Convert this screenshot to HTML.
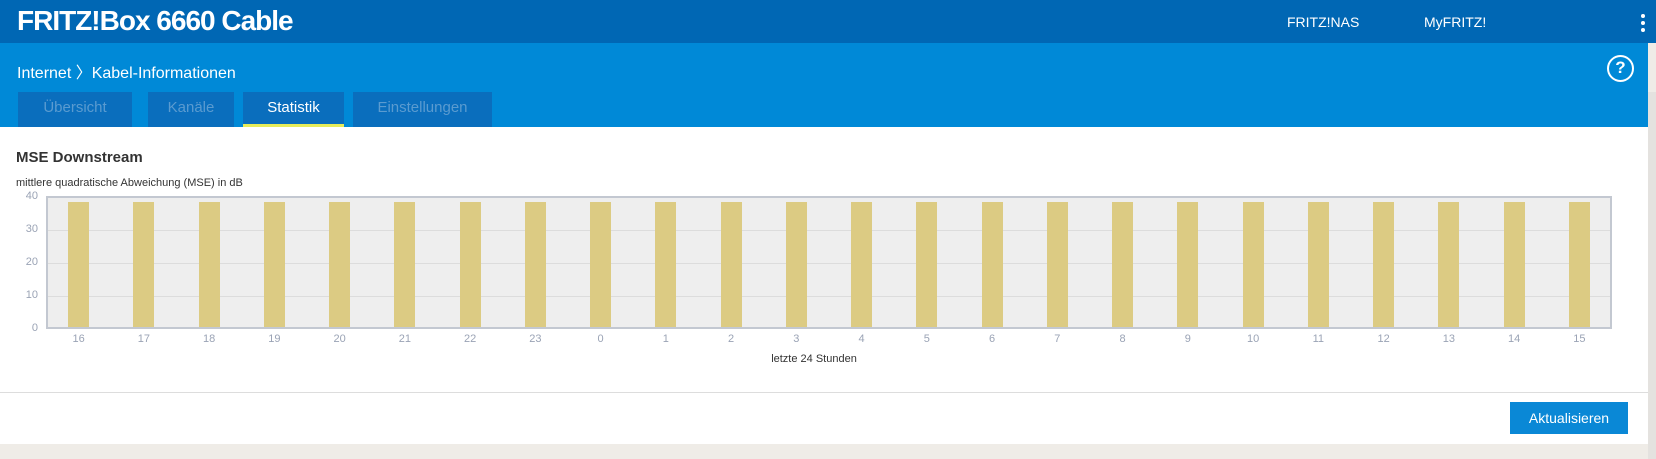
<!DOCTYPE html>
<html><head><meta charset="utf-8"><style>
*{margin:0;padding:0;box-sizing:border-box}
body{width:1656px;height:459px;background:#efece7;font-family:"Liberation Sans",sans-serif;position:relative;overflow:hidden}
.top{position:absolute;left:0;top:0;width:1656px;height:43px;background:#0067b4}
.title{position:absolute;left:17px;top:5px;color:#fff;font-weight:bold;font-size:28px;letter-spacing:-1px}
.nav{position:absolute;top:14px;color:#fff;font-size:14px}
.dots{position:absolute;left:1641px;top:14px;width:5px}
.dots i{display:block;width:4px;height:4px;border-radius:2px;background:#fff;margin-bottom:3px}
.sub{position:absolute;left:0;top:43px;width:1648px;height:84px;background:#0089d7}
.scroll{position:absolute;left:1648px;top:92px;width:8px;height:367px;background:#e4e2df}
.bc{position:absolute;left:17px;top:59px;color:#fff;font-size:16px}
.help{position:absolute;left:1607px;top:55px;width:27px;height:27px;border:2.5px solid #fff;border-radius:50%;color:#fff;font-weight:bold;font-size:17px;text-align:center;line-height:22px}
.tab{position:absolute;top:92px;height:35px;background:#0a6ebd;color:#5a9bd0;font-size:15px;text-align:center;line-height:32px}
.tab.act{color:#fff;border-bottom:3px solid #e6ec5a;background:#0a6ebd}
.main{position:absolute;left:0;top:127px;width:1648px;height:317px;background:#fff}
h2{position:absolute;left:16px;top:149px;font-size:15px;color:#333;font-weight:bold}
.st{position:absolute;left:16px;top:177px;font-size:11px;color:#333}
.plot{position:absolute;left:46px;top:196px;width:1566px;height:133px;background:#eee;border:2px solid #c3c8d1}
.g{position:absolute;left:0;width:100%;height:1px;background:#dcdcdc}
.bar{position:absolute;bottom:0;width:21px;height:125px;background:#dccb83}
.yl{position:absolute;left:24px;width:14px;text-align:right;font-size:11px;color:#9aa3b5}
.xl{position:absolute;top:333px;width:30px;text-align:center;font-size:11px;color:#9aa3b5}
.xt{position:absolute;left:714px;top:353px;width:200px;text-align:center;font-size:11px;color:#333}
.hr{position:absolute;left:0;top:392px;width:1648px;height:1px;background:#ddd}
.btn{position:absolute;left:1510px;top:402px;width:118px;height:32px;background:#0a88d6;color:#fff;font-size:14px;text-align:center;line-height:32px}
</style></head><body>
<div class="top"></div>
<div class="title">FRITZ!Box 6660 Cable</div>
<div class="nav" style="left:1287px">FRITZ!NAS</div>
<div class="nav" style="left:1424px">MyFRITZ!</div>
<div class="dots"><i></i><i></i><i></i></div>
<div class="sub"></div>
<div class="scroll"></div>
<div class="bc">Internet 〉Kabel-Informationen</div>
<div class="help">?</div>
<div class="tab" style="left:18px;width:114px">Übersicht</div>
<div class="tab" style="left:148px;width:86px">Kanäle</div>
<div class="tab act" style="left:243px;width:101px">Statistik</div>
<div class="tab" style="left:353px;width:139px">Einstellungen</div>
<div class="main"></div>
<h2>MSE Downstream</h2>
<div class="st">mittlere quadratische Abweichung (MSE) in dB</div>
<div class="yl" style="top:190px">40</div>
<div class="yl" style="top:223px">30</div>
<div class="yl" style="top:256px">20</div>
<div class="yl" style="top:289px">10</div>
<div class="yl" style="top:322px">0</div>
<div class="plot">
<div class="g" style="top:32px"></div><div class="g" style="top:65px"></div><div class="g" style="top:98px"></div>
<div id="bars"></div>
</div>
<div id="xls"></div>
<div class="xt">letzte 24 Stunden</div>
<div class="hr"></div>
<div class="btn">Aktualisieren</div>
<script>
var b='',x='',labs=[16,17,18,19,20,21,22,23,0,1,2,3,4,5,6,7,8,9,10,11,12,13,14,15];
for(var i=0;i<24;i++){var c=32.6+i*65.25;b+='<div class="bar" style="left:'+(c-10.5-2)+'px"></div>';x+='<div class="xl" style="left:'+(46+c-15)+'px">'+labs[i]+'</div>';}
document.getElementById('bars').innerHTML=b;document.getElementById('xls').innerHTML=x;
</script>
</body></html>
